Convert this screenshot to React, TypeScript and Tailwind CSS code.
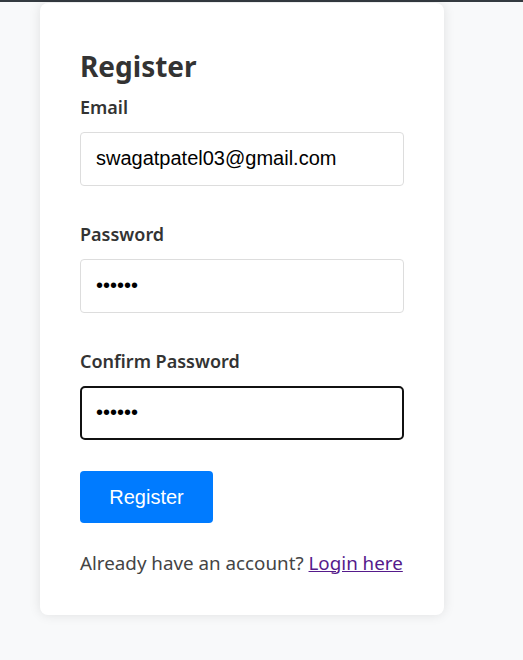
import React, { useState } from "react";

const RegisterForm: React.FC = () => {
  const [email, setEmail] = useState("swagatpatel03@gmail.com");
  const [password, setPassword] = useState("123456");
  const [confirm, setConfirm] = useState("123456");

  return (
    <div className="ml-[40px] mt-[1px] w-[404px] rounded-lg bg-white px-[40px] pt-[47px] pb-[38px] shadow-[0_0_12px_rgba(0,0,0,0.1)]">
      <h2 className="mb-[10px] text-[28px] leading-[1.2] font-bold text-[#333]">Register</h2>

      {/* Email */}
      <div className="mb-[35px]">
        <label className="mb-[11px] block text-[18px] leading-[27px] font-semibold text-[#333]">Email</label>
        <input
          type="email"
          value={email}
          onChange={(e) => setEmail(e.target.value)}
          className="h-[54px] w-full rounded border border-[#ddd] px-[15px] font-['Liberation_Sans',Arial,sans-serif] text-[20px] text-black outline-none"
        />
      </div>

      {/* Password */}
      <div className="mb-[35px]">
        <label className="mb-[11px] block text-[18px] leading-[27px] font-semibold text-[#333]">Password</label>
        <input
          type="password"
          value={password}
          onChange={(e) => setPassword(e.target.value)}
          className="h-[54px] w-full rounded border border-[#ddd] px-[15px] font-['Liberation_Sans',Arial,sans-serif] text-[20px] text-black outline-none"
        />
      </div>

      {/* Confirm Password */}
      <div className="mb-[31px]">
        <label className="mb-[11px] block text-[18px] leading-[27px] font-semibold text-[#333]">Confirm Password</label>
        <input
          type="password"
          value={confirm}
          autoFocus
          onChange={(e) => setConfirm(e.target.value)}
          className="h-[54px] w-full rounded-[5px] border-2 border-[#111] px-[14px] font-['Liberation_Sans',Arial,sans-serif] text-[20px] text-black caret-black outline-none"
        />
      </div>

      <button className="h-[52px] w-[133px] rounded bg-[#007bff] font-['Liberation_Sans',Arial,sans-serif] text-[20px] text-white">
        Register
      </button>

      <p className="mt-[27px] whitespace-nowrap text-[18.8px] leading-[27px] text-[#444]">
        Already have an account?{" "}
        <a href="#" className="text-[#551a8b] underline">
          Login here
        </a>
      </p>
    </div>
  );
};

export default function App() {
  return (
    <div className="min-h-[660px] border-t-2 border-[#343a40] bg-[#f8f9fa] font-['Noto_Sans',sans-serif]">
      <RegisterForm />
    </div>
  );
}
